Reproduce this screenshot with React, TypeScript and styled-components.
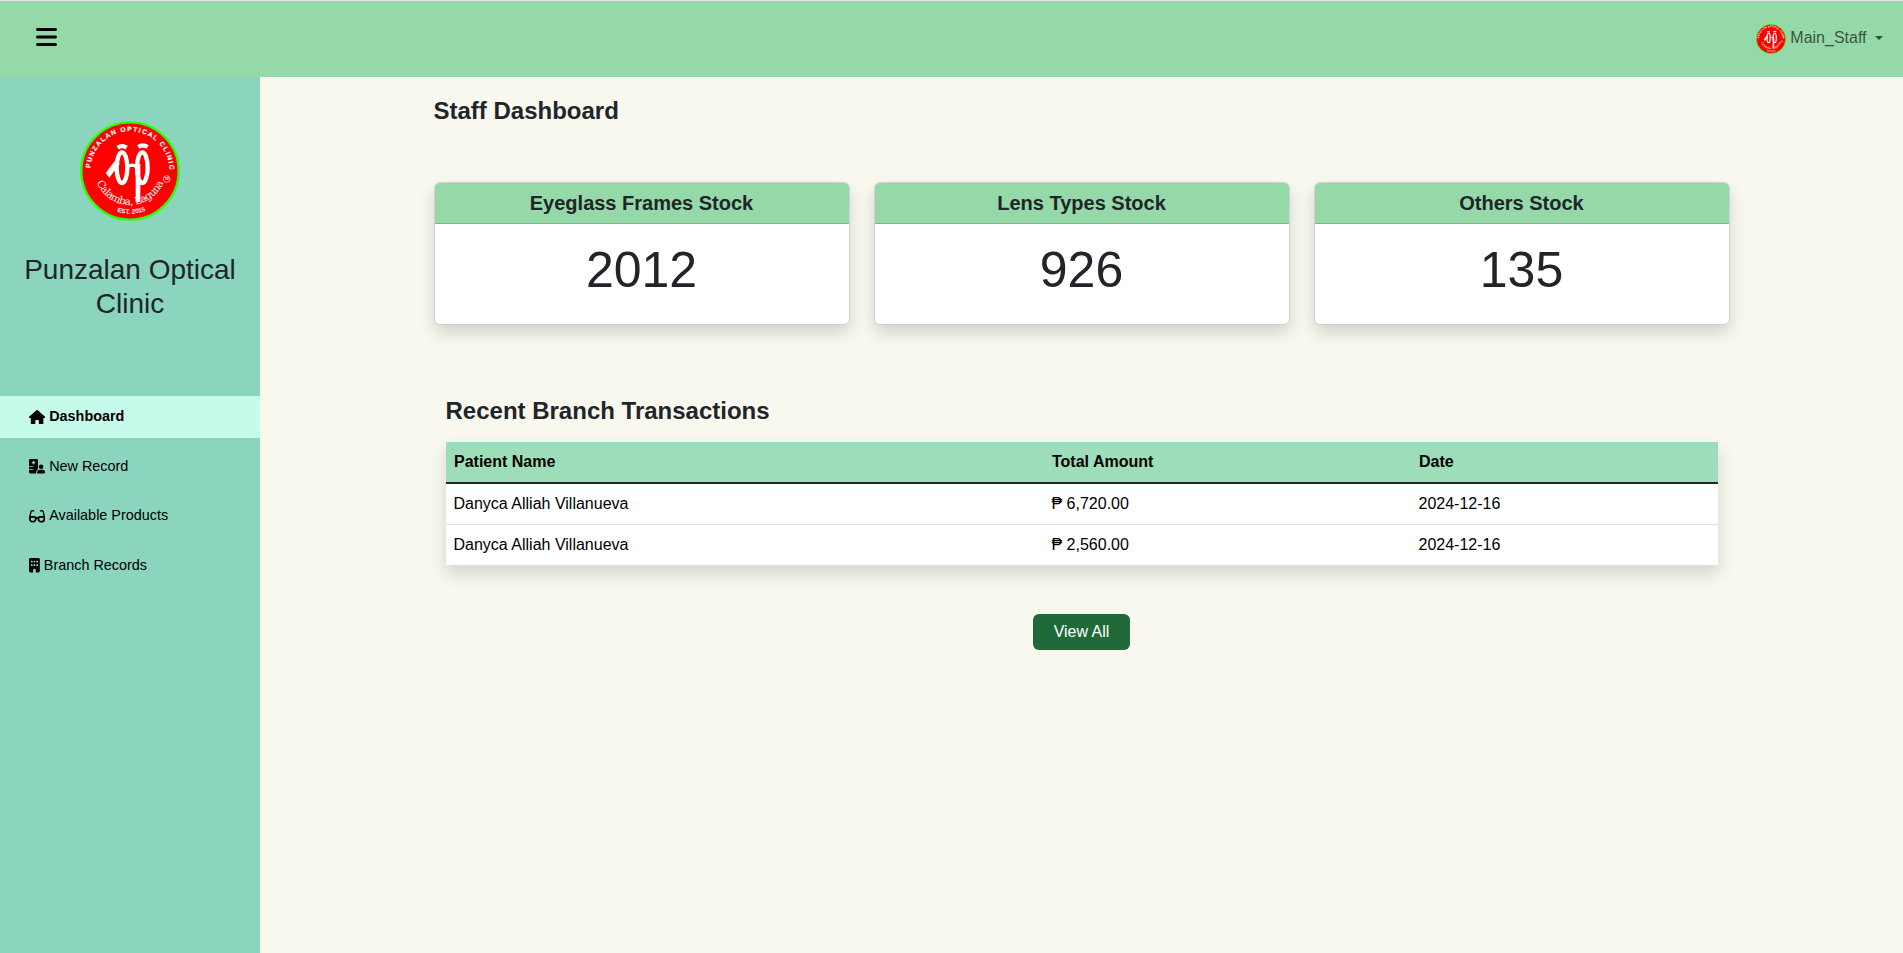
import React from 'react';
import styled, { createGlobalStyle } from 'styled-components';
import { FaBars, FaHouse, FaHospitalUser, FaGlasses, FaBuilding } from 'react-icons/fa6';
import type { IconType } from 'react-icons';

const GlobalStyle = createGlobalStyle`
  *, *::before, *::after { box-sizing: border-box; }
  body {
    margin: 0;
    background: #f9f8ee;
    color: #212529;
    font-family: Arial, "Liberation Sans", sans-serif;
    font-size: 16px;
    line-height: 1.5;
  }
  h1, h2, h3, p { margin: 0; }
`;

const Page = styled.div`
  min-height: 100vh;
  display: flex;
  flex-direction: column;
`;

const TopBar = styled.header`
  height: 77px;
  flex: none;
  display: flex;
  align-items: center;
  justify-content: space-between;
  padding: 0 20px 2px 36px;
  background: #95d9a8;
  border-top: 1px solid #dee2e0;
`;

const MenuButton = styled.button`
  display: flex;
  padding: 0 0 2px;
  border: 0;
  background: none;
  color: #000;
  font-size: 24px;
  svg { width: 21px; }
`;

const UserMenu = styled.div`
  display: flex;
  align-items: center;
  color: rgba(0, 0, 0, 0.65);
  svg { display: block; margin: 1px 4.5px 0 0; }
`;

const Caret = styled.span`
  margin-left: 8.5px;
  border-top: 4.8px solid;
  border-left: 4.8px solid transparent;
  border-right: 4.8px solid transparent;
`;

const Body = styled.div`
  flex: 1;
  display: flex;
`;

const Sidebar = styled.aside`
  width: 260px;
  flex: none;
  background: #8bd5be;
`;

const Brand = styled.div`
  height: 319px;
  padding: 44px 15px 0;
  text-align: center;
  svg { display: block; margin: 0 auto 32px; }
`;

const BrandName = styled.h2`
  font-size: 28px;
  font-weight: 400;
  line-height: 1.2;
`;

const Nav = styled.nav`
  display: flex;
  flex-direction: column;
  gap: 7.5px;
`;

const NavItem = styled.a<{ $active?: boolean }>`
  display: flex;
  align-items: center;
  gap: 4px;
  height: 42px;
  padding: 0 0 0.2px 29px;
  color: #000;
  font-size: 14.4px;
  font-weight: ${(p) => (p.$active ? 700 : 400)};
  background: ${(p) => (p.$active ? '#c6fbeb' : 'transparent')};
`;

const NavIcon = styled.span<{ $width: number }>`
  display: flex;
  width: ${(p) => p.$width}px;
  svg { width: 100%; height: 14.4px; }
`;

const Main = styled.main`
  flex: 1;
  display: flex;
  flex-direction: column;
  align-items: center;
`;

const Container = styled.div`
  width: 1296px;
  padding-top: 20px;
`;

const Heading = styled.h1`
  font-size: 24px;
  font-weight: 700;
  line-height: 28px;
`;

const Cards = styled.section`
  display: grid;
  grid-template-columns: repeat(3, 1fr);
  gap: 24px;
  margin-top: 57px;
`;

const Card = styled.article`
  height: 143px;
  overflow: hidden;
  border: 1px solid #d0d2d1;
  border-radius: 6px;
  background: #fff;
  text-align: center;
  box-shadow: 0 8px 16px rgba(0, 0, 0, 0.15);
`;

const CardHeader = styled.h3`
  height: 41px;
  padding-top: 8px;
  font-size: 20px;
  font-weight: 700;
  line-height: 24px;
  background: #95d9a8;
  border-bottom: 1px solid #7cb68b;
`;

const CardValue = styled.p`
  padding-top: 16px;
  font-size: 50px;
  line-height: 60px;
`;

const Transactions = styled.section`
  padding: 72px 12px 0;
`;

const Table = styled.table`
  width: 100%;
  margin-top: 17px;
  table-layout: fixed;
  border-spacing: 0;
  background: #fff;
  color: #000;
  text-align: left;
  box-shadow: 0 8px 16px rgba(0, 0, 0, 0.15);
`;

const HeadCell = styled.th<{ $width?: number }>`
  width: ${(p) => (p.$width ? `${p.$width}px` : 'auto')};
  height: 42px;
  padding: 0 8px 0 8.5px;
  background: #9eddb9;
  border-bottom: 2px solid #212529;
`;

const Cell = styled.td`
  height: 41px;
  padding: 0 8px;
  border-bottom: 1px solid #dee2e6;
`;

const Actions = styled.div`
  display: flex;
  justify-content: center;
  margin-top: 48px;
`;

const ViewAll = styled.button`
  width: 97px;
  height: 36px;
  padding: 0;
  border: 0;
  border-radius: 6px;
  background: #1f6a38;
  color: #fff;
  font: inherit;
`;

function Logo({ size, id }: { size: number; id: string }) {
  return (
    <svg width={size} height={size} viewBox="61 33 300 300">
      <defs>
        <path id={`${id}-top`} d="M92 183 A119 119 0 0 1 330 183" />
        <path id={`${id}-name`} d="M102 173 A109 112 0 0 0 320 173" />
        <path id={`${id}-est`} d="M81 181 A130 130 0 0 0 341 181" />
      </defs>
      <circle cx="211" cy="183" r="146" fill="#f00" stroke="#2bff00" strokeWidth="7" />
      <g fill="#fff" fontFamily="Arial, 'Liberation Sans', sans-serif" fontWeight="700">
        <text fontSize="20" stroke="#fff" strokeWidth="0.6">
          <textPath href={`#${id}-top`} startOffset="8" textLength="362" lengthAdjust="spacing">PUNZALAN OPTICAL CLINIC</textPath>
        </text>
        <text fontSize="19" textAnchor="middle">
          <textPath href={`#${id}-est`} startOffset="51%">EST. 2015</textPath>
        </text>
        <text x="321" y="211" fontSize="9" textAnchor="middle">TM</text>
      </g>
      <text fill="#fff" fontFamily="'DejaVu Serif', serif" fontSize="31" textAnchor="middle">
        <textPath href={`#${id}-name`} startOffset="50%" textLength="256" lengthAdjust="spacing">Calamba, Laguna</textPath>
      </text>
      <circle cx="321" cy="207" r="10" fill="none" stroke="#fff" strokeWidth="2" />
      <g fill="none" stroke="#fff">
        <ellipse cx="187" cy="173" rx="16" ry="46" strokeWidth="13" />
        <ellipse cx="248" cy="173" rx="16" ry="46" strokeWidth="13" />
        <path d="M206 170 Q217 161 229 170" strokeWidth="9" />
        <path d="M235 162 V276" strokeWidth="14" />
        <path d="M174 113 Q187 104 201 113" strokeWidth="13" />
        <path d="M236 111 Q249 102 264 111" strokeWidth="13" />
      </g>
      <path d="M138 189 L172 144 L180 162 L149 203 Z" fill="#fff" />
    </svg>
  );
}

const navItems: { label: string; icon: IconType; width: number; active?: boolean }[] = [
  { label: 'Dashboard', icon: FaHouse, width: 16.2, active: true },
  { label: 'New Record', icon: FaHospitalUser, width: 16.2 },
  { label: 'Available Products', icon: FaGlasses, width: 16.2 },
  { label: 'Branch Records', icon: FaBuilding, width: 10.8 },
];

const stocks = [
  { title: 'Eyeglass Frames Stock', value: 2012 },
  { title: 'Lens Types Stock', value: 926 },
  { title: 'Others Stock', value: 135 },
];

const transactions = [
  { patient: 'Danyca Alliah Villanueva', total: '₱ 6,720.00', date: '2024-12-16' },
  { patient: 'Danyca Alliah Villanueva', total: '₱ 2,560.00', date: '2024-12-16' },
];

export default function App() {
  return (
    <Page>
      <GlobalStyle />
      <TopBar>
        <MenuButton aria-label="Toggle menu"><FaBars /></MenuButton>
        <UserMenu>
          <Logo size={30} id="avatar" />
          <span>Main_Staff</span>
          <Caret />
        </UserMenu>
      </TopBar>
      <Body>
        <Sidebar>
          <Brand>
            <Logo size={100} id="brand" />
            <BrandName>Punzalan Optical Clinic</BrandName>
          </Brand>
          <Nav>
            {navItems.map(({ label, icon: Icon, width, active }) => (
              <NavItem key={label} $active={active}>
                <NavIcon $width={width}><Icon /></NavIcon>
                {label}
              </NavItem>
            ))}
          </Nav>
        </Sidebar>
        <Main>
          <Container>
            <Heading>Staff Dashboard</Heading>
            <Cards>
              {stocks.map((s) => (
                <Card key={s.title}>
                  <CardHeader>{s.title}</CardHeader>
                  <CardValue>{s.value}</CardValue>
                </Card>
              ))}
            </Cards>
            <Transactions>
              <Heading as="h2">Recent Branch Transactions</Heading>
              <Table>
                <thead>
                  <tr>
                    <HeadCell $width={598}>Patient Name</HeadCell>
                    <HeadCell $width={367}>Total Amount</HeadCell>
                    <HeadCell>Date</HeadCell>
                  </tr>
                </thead>
                <tbody>
                  {transactions.map((t) => (
                    <tr key={t.total}>
                      <Cell>{t.patient}</Cell>
                      <Cell>{t.total}</Cell>
                      <Cell>{t.date}</Cell>
                    </tr>
                  ))}
                </tbody>
              </Table>
              <Actions>
                <ViewAll>View All</ViewAll>
              </Actions>
            </Transactions>
          </Container>
        </Main>
      </Body>
    </Page>
  );
}
